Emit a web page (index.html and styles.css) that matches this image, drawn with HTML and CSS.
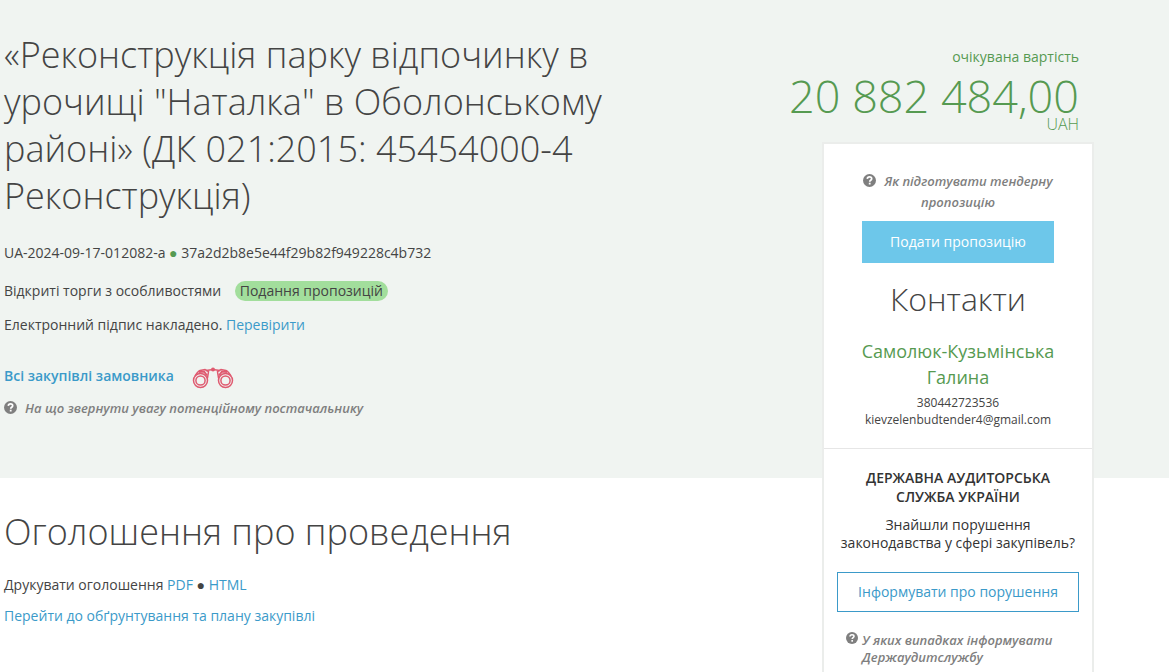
FILE: index.html
```html
<!DOCTYPE html>
<html lang="uk">
<head>
  <meta charset="UTF-8">
  <meta name="viewport" content="width=device-width, initial-scale=1.0">
  <title>UA-2024-09-17-012082-a</title>
  <link rel="stylesheet" href="styles.css">
</head>
<body>

  <svg width="0" height="0" class="sprite" aria-hidden="true">
    <symbol id="question" viewBox="0 0 13 13">
      <circle cx="6.5" cy="6.5" r="6.5" fill="#7f7f7f"/>
      <path d="M4.3 4.9C4.4 3.5 5.3 2.9 6.5 2.9c1.3 0 2.2.7 2.2 1.8 0 1.5-2 1.5-2 3" fill="none" stroke="#fff" stroke-width="1.7"/>
      <rect x="5.8" y="8.7" width="1.8" height="1.8" fill="#fff"/>
    </symbol>
  </svg>

  <div class="page">
    <header class="hero">
      <h1>«Реконструкція парку відпочинку в урочищі "Наталка" в Оболонському районі» (ДК 021:2015: 45454000-4 Реконструкція)</h1>
      <p class="tender-id">UA-2024-09-17-012082-a <span class="dot">●</span> 37a2d2b8e5e44f29b82f949228c4b732</p>
      <p class="procedure">Відкриті торги з особливостями <span class="status">Подання пропозицій</span></p>
      <p class="sign">Електронний підпис накладено. <a href="#">Перевірити</a></p>
      <div class="customer">
        <a href="#">Всі закупівлі замовника</a>
        <a href="#" aria-label="Моніторинг">
          <svg class="binoculars" width="42" height="26" viewBox="0 -4 42 26" fill="none" stroke="#df5a70">
            <circle cx="8.5" cy="13.5" r="7" stroke-width="1.5"/>
            <circle cx="8.5" cy="13.5" r="4.6" stroke-width="1.5"/>
            <circle cx="33.5" cy="13.5" r="7" stroke-width="1.5"/>
            <circle cx="33.5" cy="13.5" r="4.6" stroke-width="1.5"/>
            <path d="M3 9C5 6 6 4 8 3.500l5-1 3.500 2.200L15.500 11M39 9C37 6 36 4 34 3.500l-5-1-3.500 2.200L26.500 11" stroke-width="1.5"/>
            <path d="M7 5l5-.5 3 4M35 5l-5-.5-3 4" stroke-width="2"/>
            <path d="M14 3.500l7-1 7 1" stroke-width="1.500"/>
            <circle cx="21" cy="2.500" r="2" fill="#df5a70" stroke="none"/>
          </svg>
        </a>
      </div>
      <a href="#" class="hint"><svg class="icon"><use href="#question"/></svg>На що звернути увагу потенційному постачальнику</a>
    </header>

    <main class="notice">
      <h2>Оголошення про проведення</h2>
      <p>Друкувати оголошення <a href="#">PDF</a> ● <a href="#">HTML</a></p>
      <p><a href="#">Перейти до обґрунтування та плану закупівлі</a></p>
    </main>

    <aside class="sidebar">
      <div class="price">
        <div class="price-label">очікувана вартість</div>
        <div class="price-value">20 882 484,00</div>
        <div class="price-currency">UAH</div>
      </div>
      <div class="card">
        <section class="contacts">
          <a href="#" class="hint hint-tender"><svg class="icon"><use href="#question"/></svg>Як підготувати тендерну пропозицію</a>
          <button type="button" class="btn-offer">Подати пропозицію</button>
          <h2>Контакти</h2>
          <h3>Самолюк-Кузьмінська Галина</h3>
          <div class="contact-line">380442723536</div>
          <div class="contact-line">kievzelenbudtender4@gmail.com</div>
        </section>
        <section class="audit">
          <h4>ДЕРЖАВНА АУДИТОРСЬКА СЛУЖБА УКРАЇНИ</h4>
          <p>Знайшли порушення законодавства у сфері закупівель?</p>
          <button type="button" class="btn-report">Інформувати про порушення</button>
          <a href="#" class="hint hint-audit"><svg class="icon"><use href="#question"/></svg><span>У яких випадках інформувати Держаудитслужбу</span></a>
        </section>
      </div>
    </aside>
  </div>

</body>
</html>
```

FILE: styles.css
```css
* {
  box-sizing: border-box;
}

body {
  margin: 0;
  font-family: 'Open Sans', sans-serif;
  font-size: 14px;
  line-height: 20px;
  color: #444;
  background: #fff;
}

h1, h2, h3, h4, p {
  margin: 0;
}

h1, h2 {
  font-size: 36px;
  font-weight: 300;
  line-height: 47px;
}

a {
  color: #3b9ac9;
  text-decoration: none;
}

.sprite {
  position: absolute;
}

/* the sidebar spans both rows and hangs over the hero */
.page {
  display: grid;
  grid-template-columns: minmax(0, 1fr) 304px 75px;
  grid-template-rows: auto 1fr;
  min-height: 100vh;
}

.hero {
  grid-column: 1 / -1;
  grid-row: 1;
  padding: 31px 4px 60px;
  background: #f0f4f1;
}

.hero h1 {
  max-width: 620px;
  margin-bottom: 24px;
}

.dot {
  color: #569a51;
}

.procedure {
  margin-top: 18px;
}

.status {
  display: inline-block;
  margin-left: 10px;
  padding: 0 5px;
  border-radius: 10px;
  background: #a2de9c;
}

.sign {
  margin-top: 14px;
}

.customer {
  display: flex;
  align-items: center;
  gap: 18px;
  margin-top: 28px;
  font-weight: 600;
}

.binoculars {
  display: block;
}

.hint {
  font-size: 13px;
  font-style: italic;
  font-weight: 600;
  color: #7f7f7f;
}

.icon {
  width: 13px;
  height: 13px;
  margin-right: 8px;
  vertical-align: -1px;
}

.hero .hint {
  display: block;
  margin-top: 9px;
}

.notice {
  grid-column: 1;
  grid-row: 2;
  padding: 30px 4px;
}

.notice h2 {
  margin-bottom: 20px;
}

.notice p {
  margin-bottom: 11px;
}

.sidebar {
  grid-column: 2;
  grid-row: 1 / 3;
  display: flex;
  flex-direction: column;
  align-items: flex-end;
  padding-top: 47px;
}

.price {
  padding-right: 15px;
  text-align: right;
  white-space: nowrap;
  color: #569a51;
}

.price-value {
  margin-top: 7px;
  font-size: 45px;
  font-weight: 300;
  line-height: 44px;
}

.price-currency {
  font-size: 16px;
  font-weight: 300;
  line-height: 12px;
}

.card {
  flex: 1;
  width: 272px;
  margin-top: 12px;
  border: 2px solid #ebedeb;
  border-bottom: 0;
  background: #fff;
  text-align: center;
}

.contacts {
  padding: 27px 34px 20px;
  border-bottom: 1px solid #e6e6e6;
}

.hint-tender {
  display: block;
  margin-bottom: 8px;
  line-height: 21px;
}

.btn-offer, .btn-report {
  font: inherit;
  cursor: pointer;
}

.btn-offer {
  width: 192px;
  height: 42px;
  border: 0;
  background: #6dc7ea;
  color: #fff;
}

.contacts h2 {
  font-size: 32px;
  margin: 12px 0 16px;
}

.contacts h3 {
  margin-bottom: 4px;
  font-size: 18px;
  font-weight: 400;
  line-height: 26px;
  color: #569a51;
}

.contact-line {
  font-size: 12px;
  line-height: 17px;
}

.audit {
  padding: 19px 13px 6px;
  line-height: 18px;
  color: #333;
}

.audit h4 {
  padding: 0 20px;
  margin-bottom: 10px;
  font-size: 14px;
  font-weight: 600;
  line-height: 19px;
}

.btn-report {
  width: 100%;
  height: 40px;
  margin: 20px 0;
  border: 1px solid #3b9ac9;
  background: #fff;
  color: #3b9ac9;
}

.hint-audit {
  display: flex;
  padding-left: 9px;
  line-height: 17px;
  text-align: left;
}

.hint-audit .icon {
  flex: none;
  width: 12px;
  height: 12px;
  margin-right: 4px;
}
```
